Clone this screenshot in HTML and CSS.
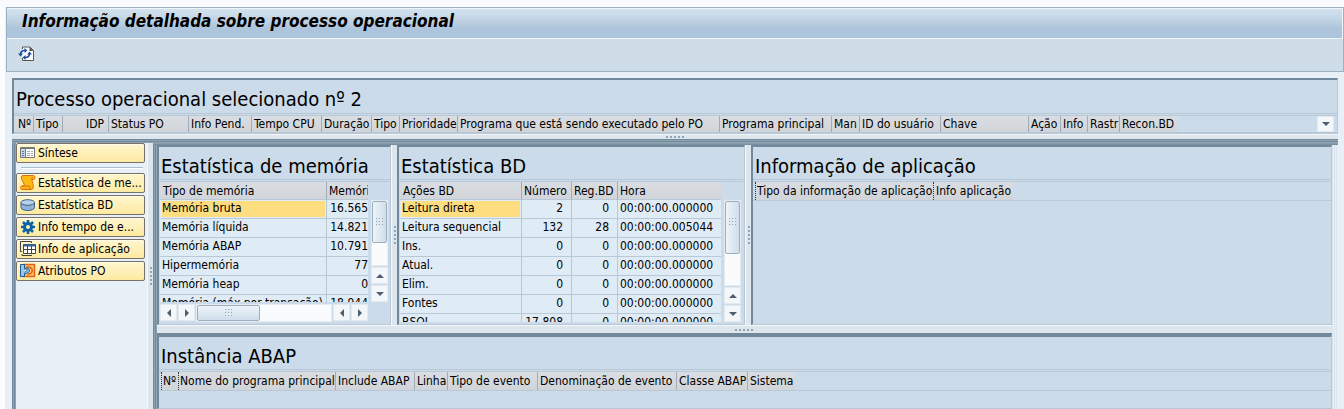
FILE: index.html
```html
<!DOCTYPE html>
<html lang="pt">
<head>
    <meta charset="UTF-8">
    <meta name="viewport" content="width=device-width, initial-scale=1.0">
    <title>Informação detalhada sobre processo operacional</title>
    <link rel="stylesheet" href="styles.css">
</head>
<body>
    <header class="app-header">
        <h1>Informação detalhada sobre processo operacional</h1>
        <div class="toolbar">
            <button class="tool-btn" aria-label="Atualizar">
                <svg width="17" height="16" viewBox="0 0 17 16">
                    <path d="M4.500 3V1h7.500l3.500 3.500v10h-11V12" fill="#fff" stroke="#555" />
                    <path d="M11.500 1v4h4z" fill="#555" />
                    <path d="M2.500 8.500C2.500 5.500 4.500 4.300 7 4.500" fill="none" stroke="#1f4f9c" stroke-width="1.600" />
                    <path d="M6.500 2L9.500 4.500 6.500 7zM0 7.500h5L2.500 10.500z" fill="#1f4f9c" />
                    <path d="M11.500 7.500C11.500 10.500 9.500 11.700 7 11.500" fill="none" stroke="#1f4f9c" stroke-width="1.600" />
                    <path d="M7.500 14L4.500 11.500 7.500 9zM9 8.500h5L11.500 5.500z" fill="#1f4f9c" />
                </svg>
            </button>
        </div>
    </header>

    <section class="panel process">
        <h2>Processo operacional selecionado nº 2</h2>
        <div class="head-row">
            <table class="grid process-grid">
                <thead>
                    <tr>
                        <th>Nº</th>
                        <th>Tipo</th>
                        <th class="num">IDP</th>
                        <th>Status PO</th>
                        <th>Info Pend.</th>
                        <th>Tempo CPU</th>
                        <th>Duração</th>
                        <th>Tipo</th>
                        <th>Prioridade</th>
                        <th>Programa que está sendo executado pelo PO</th>
                        <th>Programa principal</th>
                        <th>Man</th>
                        <th>ID do usuário</th>
                        <th>Chave</th>
                        <th>Ação</th>
                        <th>Info</th>
                        <th>Rastr</th>
                        <th>Recon.BD</th>
                    </tr>
                </thead>
            </table>
            <button class="scroll-btn down" aria-label="Rolar para baixo"></button>
        </div>
    </section>

    <div class="split-h"><span class="grip-h"></span></div>

    <main class="main">
        <nav class="side">
            <button class="side-btn">
                <svg width="16" height="16" viewBox="0 0 16 16">
                    <path d="M.500 2.500h14v10H.500z" fill="#fff" stroke="#777" />
                    <path d="M1 4h4v8H1z" fill="#c4d7ea" />
                    <path d="M1 3.500h13" stroke="#777" />
                    <path d="M5.500 4v8" stroke="#777" />
                    <path d="M2 6.500h2M2 8.500h2M2 10.500h2" stroke="#4a7fb5" />
                    <path d="M7 6.500h3M7 8.500h3M7 10.500h3M11 6.500h2M11 8.500h2M11 10.500h2" stroke="#aaa" />
                </svg>
                <span>Síntese</span>
            </button>
            <hr>
            <button class="side-btn">
                <svg width="16" height="16" viewBox="0 0 16 16">
                    <path d="M3 .500h10.500c2 0 2 4 0 4h-1.500c0 3 2 5 1 8.500 0 1-1 1.500-2 1.500H2c-2 0-2-3.500 0-3.500h2c1-2-1.500-4-2-6C1 3 1 .500 3 .500z" fill="#fdb913" stroke="#e06a10" />
                    <path d="M12 4.500V2M2 11h7c1.500 0 1.500 3.500 0 3.500" fill="none" stroke="#e06a10" />
                </svg>
                <span>Estatística de me...</span>
            </button>
            <button class="side-btn">
                <svg width="16" height="16" viewBox="0 0 16 16">
                    <path d="M1 5.500v5c0 4 13.500 4 13.500 0v-5" fill="#8fb4da" stroke="#3d5f80" />
                    <ellipse cx="7.750" cy="5.500" rx="6.750" ry="2.800" fill="#b7d1ec" stroke="#3d5f80" />
                </svg>
                <span>Estatística BD</span>
            </button>
            <button class="side-btn">
                <svg width="16" height="16" viewBox="0 0 16 16">
                    <circle cx="8" cy="8" r="3.500" fill="none" stroke="#0b63a5" stroke-width="3" />
                    <path d="M8 1v3M8 12v3M1 8h3M12 8h3M3 3l2.300 2.300M10.700 10.700L13 13M13 3l-2.300 2.300M5.300 10.700L3 13" stroke="#0b63a5" stroke-width="2.600" />
                </svg>
                <span>Info tempo de e...</span>
            </button>
            <button class="side-btn">
                <svg width="16" height="16" viewBox="0 0 16 16">
                    <path d="M11.500 2V.500H.500v10H2M2 13v1.500h10" fill="none" stroke="#444" />
                    <path d="M3.500 3.500h12v9h-12z" fill="#fff" stroke="#444" />
                    <path d="M4 4.500h11" stroke="#2d6da8" stroke-width="2" />
                    <path d="M4 8.500h11M7.500 5v7M11.500 5v7" stroke="#444" />
                </svg>
                <span>Info de aplicação</span>
            </button>
            <button class="side-btn">
                <svg width="16" height="16" viewBox="0 0 16 16">
                    <path d="M4 1.500h10.500v12H4z" fill="#fbc46a" stroke="#e0621a" stroke-width="1.500" />
                    <path d="M6 4.500c7-2.500 9 6.500 1.500 7" fill="none" stroke="#e0621a" stroke-width="1.500" />
                    <path d="M.500 1.500h4v4c5-2.500 8 5 0 5v3h-4z" fill="#9cc4e6" stroke="#1c5c96" />
                    <path d="M4.500 6.500c3-1.500 4 2 0 2.500" fill="#fff" stroke="#1c5c96" />
                </svg>
                <span>Atributos PO</span>
            </button>
        </nav>

        <div class="split-v"><span class="grip-v"></span></div>

        <div class="content">
            <div class="upper">
                <section class="panel memory">
                    <h2>Estatística de memória</h2>
                    <div class="scroll-area">
                        <div class="viewport">
                            <table class="grid data memory-grid">
                                <thead>
                                    <tr><th>Tipo de memória</th><th>Memóri</th></tr>
                                </thead>
                                <tbody>
                                    <tr><td class="selected">Memória bruta</td><td>16.565</td></tr>
                                    <tr><td>Memória líquida</td><td>14.821</td></tr>
                                    <tr><td>Memória ABAP</td><td>10.791</td></tr>
                                    <tr><td>Hipermemória</td><td>77</td></tr>
                                    <tr><td>Memória heap</td><td>0</td></tr>
                                    <tr><td>Memória (máx.por transação)</td><td>18.944</td></tr>
                                </tbody>
                            </table>
                        </div>
                        <div class="vscroll">
                            <div class="track"><div class="thumb"></div></div>
                            <button class="scroll-btn up" aria-label="Rolar para cima"></button>
                            <button class="scroll-btn down" aria-label="Rolar para baixo"></button>
                        </div>
                    </div>
                    <div class="hscroll">
                        <button class="scroll-btn left" aria-label="Início"></button>
                        <button class="scroll-btn right" aria-label="Rolar para a direita"></button>
                        <div class="track"><div class="thumb"></div></div>
                        <button class="scroll-btn left" aria-label="Rolar para a esquerda"></button>
                        <button class="scroll-btn right" aria-label="Fim"></button>
                    </div>
                </section>

                <div class="split-v"><span class="grip-v"></span></div>

                <section class="panel database">
                    <h2>Estatística BD</h2>
                    <div class="scroll-area">
                        <div class="viewport">
                            <table class="grid data database-grid">
                                <thead>
                                    <tr><th>Ações BD</th><th>Número</th><th>Reg.BD</th><th>Hora</th></tr>
                                </thead>
                                <tbody>
                                    <tr><td class="selected">Leitura direta</td><td>2</td><td>0</td><td>00:00:00.000000</td></tr>
                                    <tr><td>Leitura sequencial</td><td>132</td><td>28</td><td>00:00:00.005044</td></tr>
                                    <tr><td>Ins.</td><td>0</td><td>0</td><td>00:00:00.000000</td></tr>
                                    <tr><td>Atual.</td><td>0</td><td>0</td><td>00:00:00.000000</td></tr>
                                    <tr><td>Elim.</td><td>0</td><td>0</td><td>00:00:00.000000</td></tr>
                                    <tr><td>Fontes</td><td>0</td><td>0</td><td>00:00:00.000000</td></tr>
                                    <tr><td>RSQL</td><td>17.808</td><td>0</td><td>00:00:00.000000</td></tr>
                                </tbody>
                            </table>
                        </div>
                        <div class="vscroll">
                            <div class="track"><div class="thumb"></div></div>
                            <button class="scroll-btn up" aria-label="Rolar para cima"></button>
                            <button class="scroll-btn down" aria-label="Rolar para baixo"></button>
                        </div>
                    </div>
                </section>

                <div class="split-v"><span class="grip-v"></span></div>

                <section class="panel application">
                    <h2>Informação de aplicação</h2>
                    <div class="head-row">
                        <table class="grid application-grid">
                            <thead>
                                <tr><th class="key">Tipo da informação de aplicação</th><th class="key">Info aplicação</th></tr>
                            </thead>
                        </table>
                    </div>
                </section>
            </div>

            <div class="split-h"><span class="grip-h"></span></div>

            <section class="panel instance">
                <h2>Instância ABAP</h2>
                <div class="head-row">
                    <table class="grid instance-grid">
                        <thead>
                            <tr>
                                <th class="key">Nº</th>
                                <th class="key">Nome do programa principal</th>
                                <th>Include ABAP</th>
                                <th>Linha</th>
                                <th>Tipo de evento</th>
                                <th>Denominação de evento</th>
                                <th>Classe ABAP</th>
                                <th>Sistema</th>
                            </tr>
                        </thead>
                    </table>
                </div>
            </section>
        </div>
    </main>
</body>
</html>
```
FILE: styles.css
```css
* {
    box-sizing: border-box;
}

body {
    margin: 0;
    padding: 7px 0 0 6px;
    height: 100vh;
    display: flex;
    flex-direction: column;
    overflow: hidden;
    background: linear-gradient(#f8fafd 7px, transparent 7px), linear-gradient(to right, #fafcfe 5px, #e8eff6 5px);
    font-family: "DejaVu Sans Condensed", "DejaVu Sans", sans-serif;
    font-stretch: condensed;
    font-size: 12px;
    color: #000;
}

button {
    font: inherit;
    color: inherit;
    margin: 0;
    padding: 0;
}

/* Title bar and toolbar */
.app-header {
    border: 1px solid #9eb0c2;
    background: #cfdde8;
}

h1 {
    margin: 0;
    height: 31px;
    padding: 0 15px;
    border: 1px solid #eef4f9;
    border-left: 0;
    background: linear-gradient(#d3e2ef, #bdd0e1 45%, #adc5dc 65%, #acc4dc);
    font-size: 17px;
    line-height: 25px;
    font-weight: bold;
    font-style: italic;
}

.toolbar {
    height: 32px;
    padding: 7px 11px;
}

.tool-btn {
    display: block;
    border: 0;
    background: none;
}

.tool-btn svg {
    display: block;
}

/* Panels */
.panel {
    border: 1px solid #b9c8d6;
    border-top: 2px solid #71899b;
    border-left: 2px solid #71899b;
    background: #cbdbe9;
}

h2 {
    margin: 0;
    height: 33px;
    padding: 3px 2px 0;
    border-bottom: 1px solid #b9c8d6;
    font-size: 20px;
    line-height: 32px;
    font-weight: normal;
    white-space: nowrap;
}

.head-row {
    display: flex;
    justify-content: space-between;
    height: 20px;
    margin-top: 1px;
    padding-left: 2px;
    border-top: 1px solid #b9c8d6;
    border-bottom: 1px solid #b9c8d6;
}

.process {
    margin: 6px 6px 0;
}

.process .head-row {
    height: 18px;
}

.process h2 {
    height: 34px;
}

/* Tables */
.grid {
    table-layout: fixed;
    border-collapse: separate;
    border-spacing: 0;
}

.grid th {
    height: 18px;
    padding: 0 0 0 2px;
    border-left: 1px solid #9fadba;
    background: linear-gradient(#dadee2, #d1d5da);
    font-weight: normal;
    line-height: 16px;
    text-align: left;
    white-space: nowrap;
}

.process-grid th {
    height: 16px;
}

.grid th:first-child {
    border-left-color: transparent;
}

.grid th.key {
    border-left: 1px dotted #333;
}

.grid th.num {
    padding-right: 4px;
    text-align: right;
}

.process-grid { width: 1162px; }
.process-grid th:nth-child(1) { width: 17px; padding-left: 1px; }
.process-grid th:nth-child(2) { width: 29px; }
.process-grid th:nth-child(3) { width: 46px; }
.process-grid th:nth-child(4) { width: 80px; }
.process-grid th:nth-child(5) { width: 63px; }
.process-grid th:nth-child(6) { width: 70px; }
.process-grid th:nth-child(7) { width: 50px; }
.process-grid th:nth-child(8) { width: 28px; }
.process-grid th:nth-child(9) { width: 58px; }
.process-grid th:nth-child(10) { width: 262px; }
.process-grid th:nth-child(11) { width: 112px; }
.process-grid th:nth-child(12) { width: 28px; }
.process-grid th:nth-child(13) { width: 81px; }
.process-grid th:nth-child(14) { width: 88px; }
.process-grid th:nth-child(15) { width: 32px; }
.process-grid th:nth-child(16) { width: 27px; }
.process-grid th:nth-child(17) { width: 32px; }
.process-grid th:nth-child(18) { width: 59px; }

.application-grid { width: 258px; }
.application-grid th:nth-child(1) { width: 178px; padding-left: 1px; }

.instance-grid { width: 634px; }
.instance-grid th:nth-child(1) { width: 17px; padding-left: 1px; }
.instance-grid th:nth-child(2) { width: 157px; padding-left: 1px; }
.instance-grid th:nth-child(3) { width: 79px; }
.instance-grid th:nth-child(4) { width: 33px; }
.instance-grid th:nth-child(5) { width: 90px; }
.instance-grid th:nth-child(6) { width: 139px; }
.instance-grid th:nth-child(7) { width: 71px; }

.data th {
    height: 18px;
    border-bottom: 1px solid #b9c8d6;
}

.data td {
    height: 19px;
    padding: 0 2px;
    border-left: 1px solid #b9c8d6;
    border-bottom: 1px solid #b9c8d6;
    background: #dfebf5;
    line-height: 16px;
    text-align: right;
    vertical-align: top;
    white-space: nowrap;
}

.data td:first-child {
    padding: 0 1px;
    border-left-color: #dfebf5;
    text-align: left;
}

.data td.selected {
    background: #fedc80;
    box-shadow: inset 0 0 0 1px #dfebf5;
}

.memory-grid { width: 208px; }
.memory-grid th:first-child { width: 166px; }
.memory-grid td:last-child { padding: 0; }

.database-grid { width: 321px; }
.database-grid th:nth-child(1) { width: 121px; }
.database-grid th:nth-child(2) { width: 50px; }
.database-grid th:nth-child(3) { width: 46px; }
.database-grid td:nth-child(2) { padding-right: 8px; }
.database-grid td:nth-child(3) { padding-right: 8px; }
.database-grid td:nth-child(4) { text-align: left; }

/* Scroll bars */
.scroll-area {
    display: flex;
    gap: 3px;
    flex: 1;
    min-height: 0;
    margin: 1px 1px 2px;
    border-top: 1px solid #b9c8d6;
}

.viewport {
    overflow: hidden;
}

.vscroll {
    display: flex;
    flex-direction: column;
    gap: 1px;
    margin-top: 18px;
}

.hscroll {
    display: flex;
    gap: 1px;
    height: 18px;
    margin: 0 22px 2px 1px;
}

.track {
    flex: 1;
    display: flex;
    flex-direction: column;
    background: #fafbfc;
    border: 1px solid #e4ebf1;
}

.thumb {
    border: 1px solid #9dafbf;
    border-radius: 2px;
    background: linear-gradient(to right, #eef4f9, #cfdeea);
}

.vscroll .thumb {
    height: 42px;
}

.database .vscroll .thumb {
    height: 53px;
}

.hscroll .thumb {
    width: 63px;
    height: 16px;
    background: linear-gradient(#eef4f9, #cfdeea);
}

.thumb::after {
    content: "";
    display: block;
    width: 7px;
    height: 7px;
    margin: 16px auto;
    background: repeating-linear-gradient(to right, transparent 0 1px, #dfe9f2 1px 3px), repeating-linear-gradient(#8fa3b5 0 1px, #dfe9f2 1px 3px);
}

.hscroll .thumb::after {
    margin: 3px auto;
}

.scroll-btn {
    display: grid;
    place-items: center;
    width: 17px;
    height: 17px;
    border: 1px solid #e2eaf1;
    background: #f4f7fa;
}

.scroll-btn::before {
    content: "";
    border: 4px solid transparent;
}

.scroll-btn.up::before { border-top: 0; border-bottom-color: #4b5f70; }
.scroll-btn.down::before { border-bottom: 0; border-top-color: #4b5f70; }
.scroll-btn.left::before { border-left: 0; border-right-color: #4b5f70; }
.scroll-btn.right::before { border-right: 0; border-left-color: #4b5f70; }

.process .scroll-btn {
    height: 16px;
    margin-right: 3px;
}

/* Splitters */
.split-h,
.split-v {
    display: flex;
    align-items: center;
    justify-content: center;
    background: #dde6ed;
}

.split-h {
    flex: none;
    height: 5px;
    margin: 0 6px;
    border-top: 1px solid #f4f8fb;
}

.split-v {
    flex: none;
    width: 6px;
    border-left: 1px solid #f4f8fb;
}

.grip-h {
    width: 19px;
    height: 2px;
    background: repeating-linear-gradient(to right, #93a5b3 0 2px, transparent 2px 4px);
}

.grip-v {
    width: 2px;
    height: 19px;
    background: repeating-linear-gradient(#93a5b3 0 2px, transparent 2px 4px);
}

/* Work area */
.main {
    flex: 1;
    min-height: 0;
    display: flex;
    margin: 0 6px;
    padding: 4px 0 0 4px;
    background: repeating-linear-gradient(#71899b 0 1px, #8fa4b3 1px 2px) top / 100% 4px no-repeat, repeating-linear-gradient(to right, #71899b 0 1px, #8fa4b3 1px 2px);
}

.side {
    flex: none;
    width: 131px;
    display: flex;
    flex-direction: column;
    gap: 2px;
    background: #e8f0f7;
}

.side hr {
    width: 122px;
    margin: 2px auto;
    border: 0;
    border-top: 1px solid #a9c0d3;
    border-bottom: 1px solid #fff;
}

.side-btn {
    display: flex;
    align-items: center;
    gap: 2px;
    width: 129px;
    height: 20px;
    padding: 0 1px 0 3px;
    border: 1px solid #77716a;
    border-radius: 2px;
    background: linear-gradient(#fff6cf, #fdeaa0);
    box-shadow: inset 1px 1px #fffbe6;
    text-align: left;
    white-space: nowrap;
}

.side-btn svg {
    flex: none;
}

.content {
    flex: 1;
    min-width: 0;
    display: flex;
    flex-direction: column;
    padding: 2px 6px 0 4px;
    background: linear-gradient(#8fa4b3, #71899b) top / 100% 2px no-repeat, repeating-linear-gradient(to left, #e8f0f6 0 1px, #dae4ec 1px 2px) right / 6px 100% no-repeat, repeating-linear-gradient(to right, #71899b 0 1px, #8fa4b3 1px 2px);
}

.upper {
    flex: none;
    height: 180px;
    display: flex;
}

.memory,
.database {
    flex: none;
    display: flex;
    flex-direction: column;
}

.memory {
    width: 234px;
}

.database {
    width: 348px;
}

.application {
    flex: 1;
}

.content > .split-h {
    height: 8px;
    margin: 0;
}

.instance {
    flex: 1;
    min-height: 0;
    border-top-width: 4px;
    overflow: hidden;
}
```
